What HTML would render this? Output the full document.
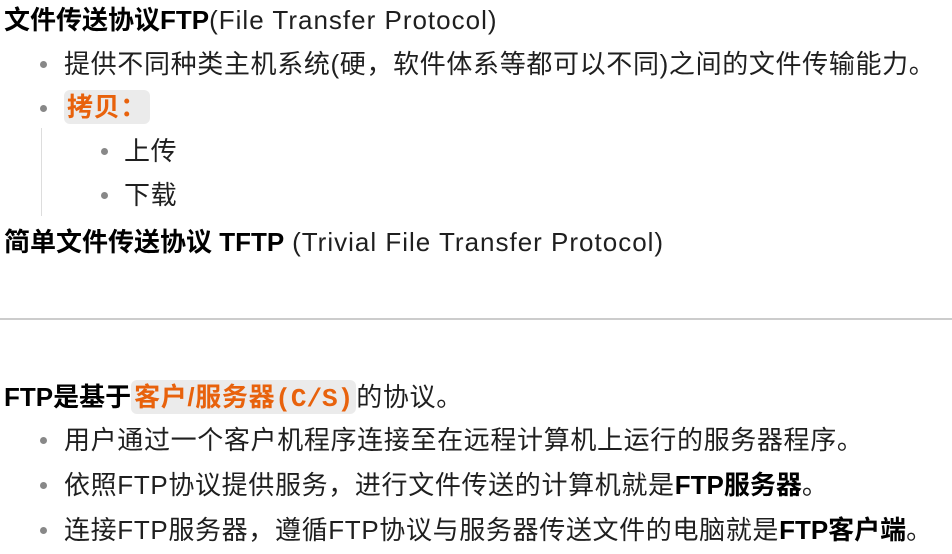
<!DOCTYPE html>
<html><head><meta charset="utf-8"><style>
body{margin:0;width:952px;height:554px;background:#fff;overflow:hidden;font-family:"Liberation Sans","Noto Sans CJK SC",sans-serif;font-size:26px;color:#1f1f1f;position:relative;letter-spacing:0.65px}
.l{position:absolute;white-space:nowrap;line-height:30px}
.b{font-weight:bold;color:#000;letter-spacing:0}
.e{letter-spacing:1px}
.dot{position:absolute;width:7px;height:7px;border-radius:50%;background:#888}
.c{background:#ebebeb;color:#e8620c;font-weight:bold;border-radius:6px;padding:2px 3px}
.m{font-family:"Liberation Mono","Noto Sans CJK SC",monospace;letter-spacing:0}
</style></head><body>
<div class="l" style="left:4px;top:5px"><span class="b">文件传送协议FTP</span><span class="e">(File Transfer Protocol)</span></div>
<div class="dot" style="left:40px;top:61px"></div>
<div class="l" style="left:64px;top:49px">提供不同种类主机系统(硬，软件体系等都可以不同)之间的文件传输能力。</div>
<div class="dot" style="left:40px;top:105px"></div>
<div class="l" style="left:64px;top:92px"><span class="c">拷贝：</span></div>
<div style="position:absolute;left:41px;top:128px;width:1px;height:88px;background:#ddd"></div>
<div class="dot" style="left:101px;top:148px"></div>
<div class="l" style="left:124px;top:136px">上传</div>
<div class="dot" style="left:101px;top:192px"></div>
<div class="l" style="left:124px;top:180px">下载</div>
<div class="l" style="left:4px;top:227px"><span class="b">简单文件传送协议 TFTP</span> <span class="e">(Trivial File Transfer Protocol)</span></div>
<div style="position:absolute;left:0;top:318px;width:952px;height:2px;background:#ccc"></div>
<div class="l" style="left:4px;top:382px"><span class="b">FTP是基于</span><span class="c">客户/服务器<span class="m">(C/S)</span></span>的协议。</div>
<div class="dot" style="left:40px;top:437px"></div>
<div class="l" style="left:64px;top:425px">用户通过一个客户机程序连接至在远程计算机上运行的服务器程序。</div>
<div class="dot" style="left:40px;top:482px"></div>
<div class="l" style="left:64px;top:470px">依照FTP协议提供服务，进行文件传送的计算机就是<span class="b">FTP服务器</span>。</div>
<div class="dot" style="left:40px;top:527px"></div>
<div class="l" style="left:64px;top:515px">连接FTP服务器，遵循FTP协议与服务器传送文件的电脑就是<span class="b">FTP客户端</span>。</div>
</body></html>
